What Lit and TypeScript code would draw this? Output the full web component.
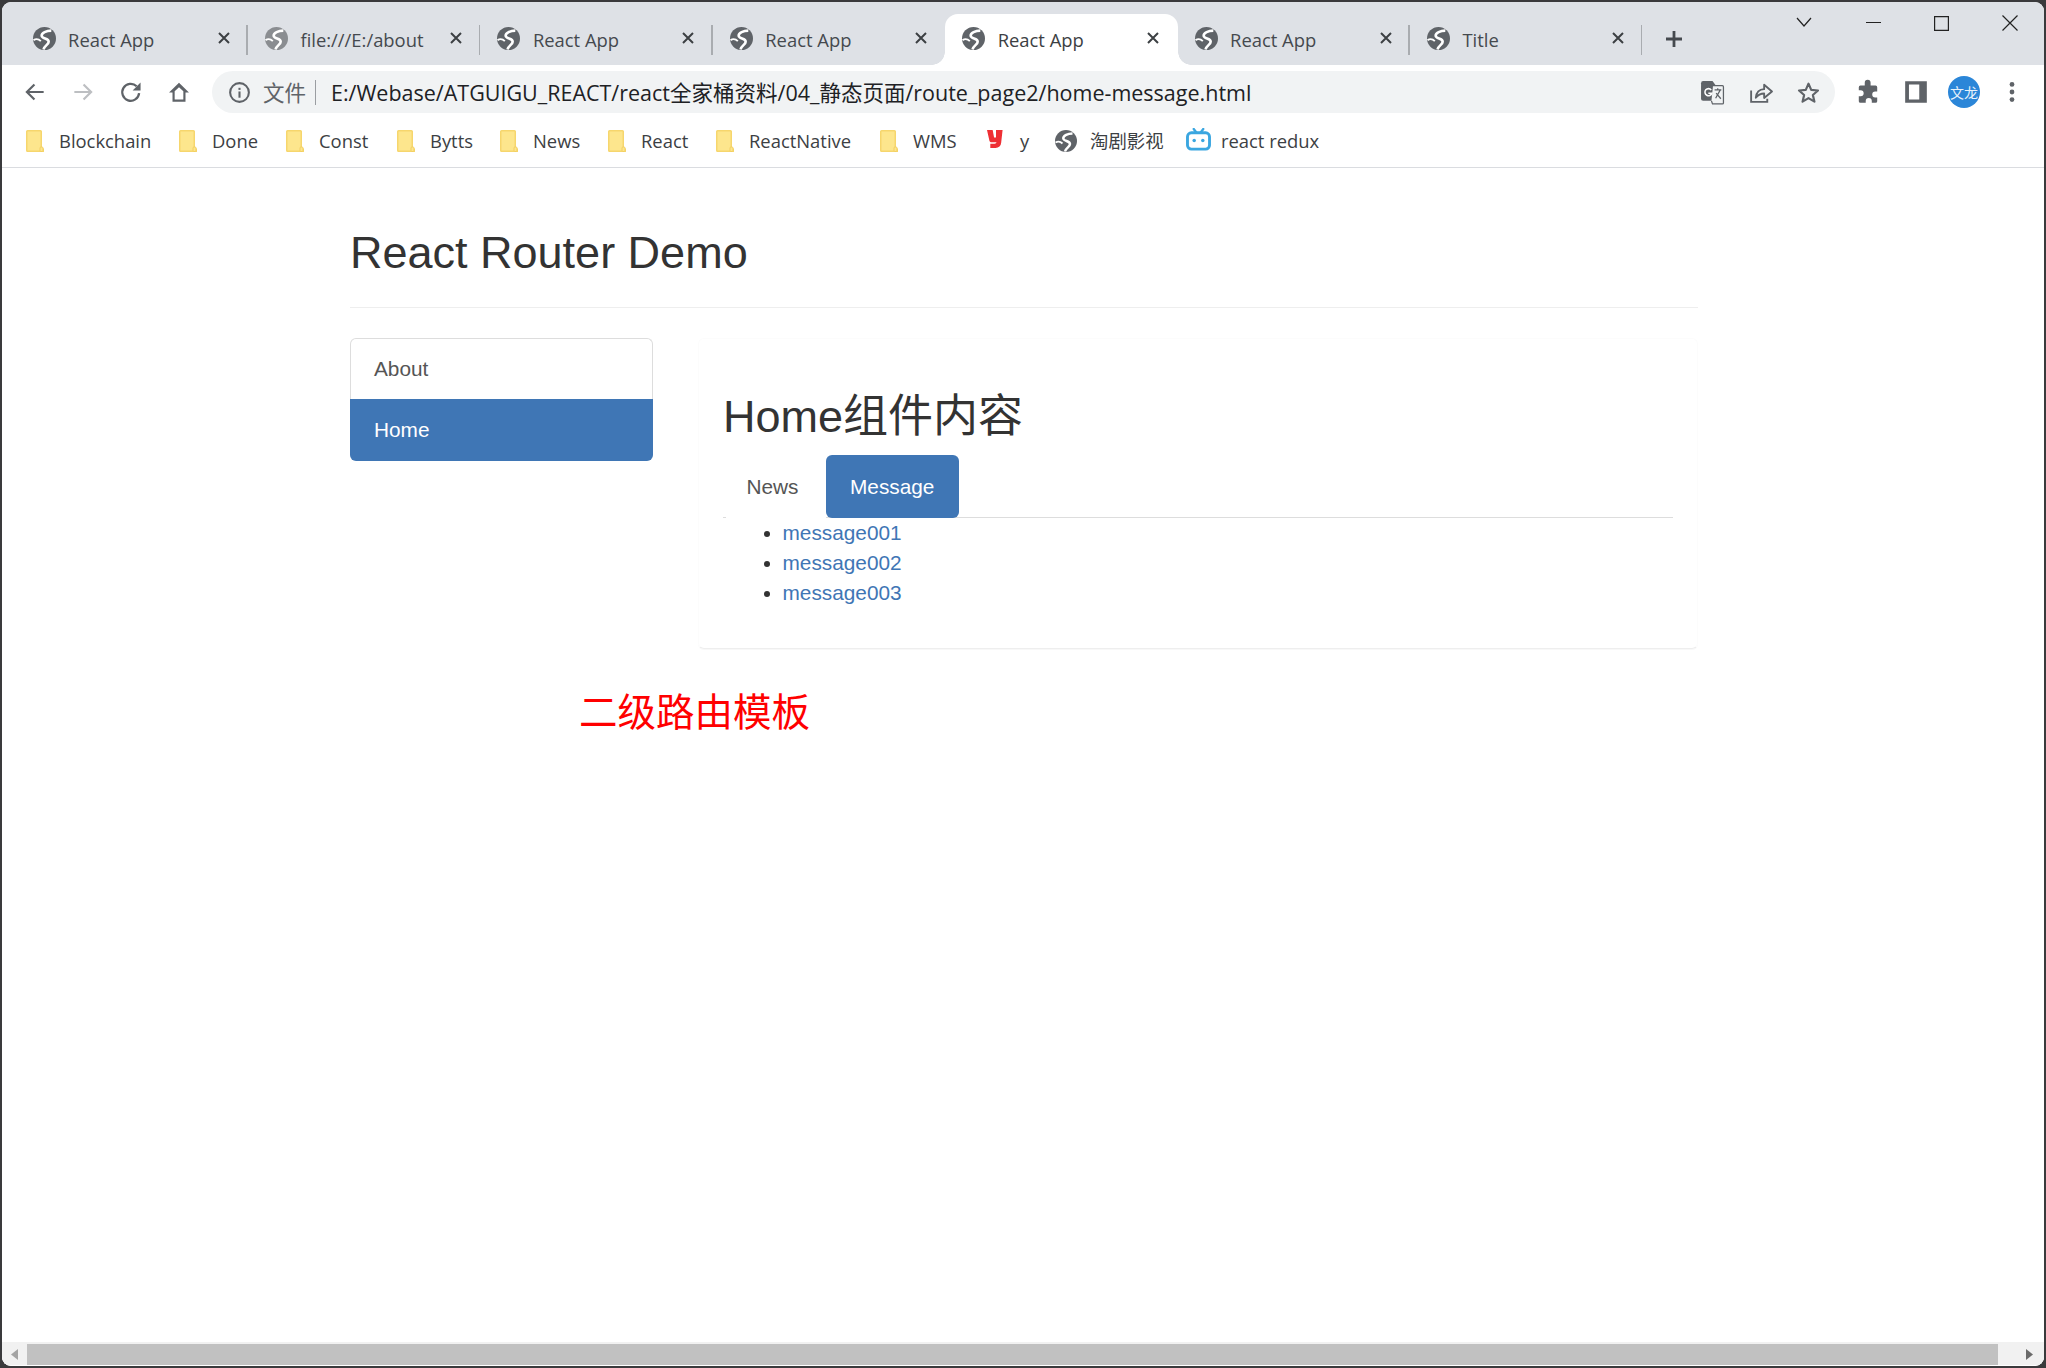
import { LitElement, html, css, svg } from "lit";
import { customElement } from "lit/decorators.js";
import { classMap } from "lit/directives/class-map.js";

const UI_FONT = css`"Open Sans", "Noto Sans CJK SC", sans-serif`;

const globe = (cls = "") => html`<svg class="globe ${cls}" viewBox="0 0 22 22">
  <circle cx="11" cy="11" r="11" fill="currentColor"></circle>
  <path d="M17.5 3.5C13 3.500 8 5.500 8.300 8.500 8.600 11.500 15 10.500 15 14 15 17 11 17.500 10 21.500" fill="none" stroke="#fff" stroke-width="2.500"></path>
  <path d="M.5 12.500C3 11 5.500 11.500 7.500 13.500" fill="none" stroke="#fff" stroke-width="1.800"></path>
</svg>`;

const closeX = html`<svg class="close" viewBox="0 0 14 14"><path d="M2 2l10 10M12 2L2 12" stroke="currentColor" stroke-width="2" fill="none"></path></svg>`;

const folder = html`<svg class="folder" viewBox="0 0 18 22">
  <path d="M1.5 0h13a1.5 1.5 0 0 1 1.5 1.500v17h2V22H1.500A1.500 1.500 0 0 1 0 20.500v-19A1.500 1.500 0 0 1 1.500 0z" fill="#f6d66d"></path>
  <rect x="1.5" y="1.5" width="13" height="19" fill="#fde68d"></rect>
  <rect x="14" y="17" width="3" height="4.5" rx="1" fill="#fde68d" stroke="#f2cf62"></rect>
</svg>`;

const icons: Record<string, unknown> = {
  back: svg`<path d="M20 12H5M11.5 5L4.5 12l7 7" fill="none" stroke="currentColor" stroke-width="2"></path>`,
  reload: svg`<path d="M19.5 13a7.8 7.8 0 1 1-2.300-6.300" fill="none" stroke="currentColor" stroke-width="2.1"></path><path d="M20.8 3.2v7.3h-7.3z" fill="currentColor"></path>`,
  home: svg`<path d="M12 3.5L2.8 12.5H6v8.5h12v-8.500h3.200zM8 19v-7.700l4-3.700 4 3.700V19z" fill="currentColor" fill-rule="evenodd"></path>`,
  info: svg`<circle cx="12" cy="12" r="9" fill="none" stroke="currentColor" stroke-width="2"></circle><rect x="11" y="11" width="2" height="6" fill="currentColor"></rect><rect x="11" y="7.5" width="2" height="2" fill="currentColor"></rect>`,
  translate: svg`<path d="M1 3a2 2 0 0 1 2-2h9l3 4v15H3a2 2 0 0 1-2-2z" fill="currentColor"></path><path d="M12.5 5.5h9a1 1 0 0 1 1 1V22a1 1 0 0 1-1 1H12l-1-3" fill="#f1f3f4" stroke="currentColor" stroke-width="1.2"></path><path d="M10.8 9.5a3.400 3.400 0 1 0 .6 3.200H8" fill="none" stroke="#fff" stroke-width="1.5"></path><path d="M14 9.5h6.5M17 8v1.500M15 17.500l4.500-8M15.500 12.500l4.500 5.500" fill="none" stroke="currentColor" stroke-width="1.2"></path>`,
  share: svg`<path d="M3 10v11h15.500v-3" fill="none" stroke="currentColor" stroke-width="1.8"></path><path d="M7.500 17c.5-5 3.500-8 8-8.200V4.500L23 11l-7.500 6.300v-4.400c-3.500 0-6 1.400-8 4.100z" fill="none" stroke="currentColor" stroke-width="1.8" stroke-linejoin="round"></path>`,
  star: svg`<path d="M12 3.500l2.600 6 6.500.6-4.900 4.300 1.500 6.400L12 17.400l-5.700 3.400 1.500-6.400L2.900 10.100l6.500-.6z" fill="none" stroke="currentColor" stroke-width="2.100" stroke-linejoin="round"></path>`,
  puzzle: svg`<path d="M9 3.500a2.700 2.700 0 0 1 5.400 0V6H19a1.500 1.500 0 0 1 1.500 1.500v4h-1.800a2.800 2.800 0 0 0 0 5.600h1.800v3.400A1.500 1.500 0 0 1 19 22h-3.500v-1.600a2.800 2.800 0 0 0-5.600 0V22H5a1.500 1.500 0 0 1-1.500-1.500V16h1.700a2.800 2.800 0 0 0 0-5.600H3.500V7.500A1.500 1.500 0 0 1 5 6h4z" fill="currentColor"></path>`,
  panel: svg`<path d="M2 2h20v20H2zM5.500 5v14H15V5z" fill="currentColor" fill-rule="evenodd"></path>`,
  dots: svg`<circle cx="12" cy="5" r="2.2" fill="currentColor"></circle><circle cx="12" cy="12" r="2.2" fill="currentColor"></circle><circle cx="12" cy="19" r="2.2" fill="currentColor"></circle>`,
};

const icon = (name: string, dim = false) =>
  html`<svg class=${classMap({ ico: true, dim })} viewBox="0 0 24 24">${icons[name]}</svg>`;

const tabs = [
  { title: "React App" },
  { title: "file:///E:/about", light: true },
  { title: "React App" },
  { title: "React App", nosep: true },
  { title: "React App", active: true, nosep: true },
  { title: "React App" },
  { title: "Title" },
];

const yIcon = html`<svg class="fav" viewBox="0 0 18 22"><path d="M0 2h6l1.5 8h2V2h7l-1.500 13.500c-.3 3.500-2.500 5.500-6 5.500H3.500v-4.500h4.500c1.200 0 2-.6 2-1.500H5c-1.500 0-2.300-.8-2.500-2z" fill="#ee2f34"></path></svg>`;
const biliIcon = html`<svg class="bili" viewBox="0 0 26 24">
  <path d="M8 1l3 4M18 1l-3 4" stroke="#3aa6e0" stroke-width="2.4" stroke-linecap="round"></path>
  <rect x="1.5" y="5" width="23" height="17" rx="4" fill="none" stroke="#3aa6e0" stroke-width="3"></rect>
  <circle cx="8.5" cy="13" r="1.8" fill="#3aa6e0"></circle><circle cx="17.5" cy="13" r="1.8" fill="#3aa6e0"></circle>
</svg>`;

// slot width of each bookmark, icon and label start are pinned to the reference
const bookmarks = [
  { label: "Blockchain", w: 153 },
  { label: "Done", w: 107 },
  { label: "Const", w: 111 },
  { label: "Bytts", w: 103 },
  { label: "News", w: 108 },
  { label: "React", w: 108 },
  { label: "ReactNative", w: 164 },
  { label: "WMS", w: 107 },
  { label: "y", w: 68, icon: yIcon },
  { label: "淘剧影视", w: 131, icon: globe("small") },
  { label: "react redux", w: 150, icon: biliIcon },
];

@customElement("app-root")
export class AppRoot extends LitElement {
  static styles = css`
    :host {
      display: block;
      width: 2046px;
      height: 1368px;
      box-sizing: border-box;
      padding: 2px;
      background: #3a3a3c;
      overflow: hidden;
    }
    .window {
      height: 100%;
      display: flex;
      flex-direction: column;
      background: #fff;
      border-radius: 9px;
      overflow: hidden;
    }
    .tabstrip {
      height: 63px;
      flex: none;
      box-sizing: border-box;
      padding: 12px 0 0 13.6px;
      display: flex;
      background: #dee1e6;
      font: 18.4px ${UI_FONT};
      color: #45494e;
    }
    .tab {
      position: relative;
      flex: none;
      width: 232.4px;
      height: 51px;
      display: flex;
      align-items: center;
      padding: 0 0 1px 17px;
      box-sizing: border-box;
    }
    .tab .globe {
      width: 23px;
      height: 23px;
      margin-top: -2px;
      flex: none;
      color: #5f6368;
    }
    .tab.light .globe {
      color: #8a8d91;
    }
    .tab .title {
      margin-left: 12.5px;
      width: 140px;
      margin-top: 1px;
      white-space: nowrap;
      overflow: hidden;
    }
    .tab .close {
      width: 14px;
      height: 14px;
      margin-left: 8.5px;
      margin-top: -3px;
      color: #3c4043;
    }
    .tab::after {
      content: "";
      position: absolute;
      right: 0;
      top: 11px;
      width: 1.5px;
      height: 30px;
      background: #a9acb0;
    }
    .tab.nosep::after {
      display: none;
    }
    .tab.active {
      background: #fff;
      border-radius: 13px 13px 0 0;
      color: #3c4043;
    }
    .tab.active::before,
    .tab.active .flare {
      content: "";
      position: absolute;
      bottom: 0;
      width: 13px;
      height: 13px;
    }
    .tab.active::before {
      left: -13px;
      background: radial-gradient(circle at 0 0, transparent 12.5px, #fff 13px);
    }
    .tab.active .flare {
      right: -13px;
      background: radial-gradient(circle at 100% 0, transparent 12.5px, #fff 13px);
    }
    .newtab {
      width: 20px;
      height: 20px;
      margin: 15px 0 0 22px;
      color: #45494e;
    }
    .caption {
      display: flex;
      align-items: center;
      margin-left: auto;
      height: 18px;
      color: #222;
    }
    .caption svg {
      flex: none;
      fill: none;
      stroke: currentColor;
      stroke-width: 1.2;
    }
    .chev {
      width: 16px;
      height: 10px;
      margin-right: 54px;
      margin-top: -2px;
    }
    .min {
      width: 15px;
      height: 15px;
      margin-right: 53px;
      margin-top: -2px;
    }
    .max {
      width: 15px;
      height: 15px;
      margin-right: 53px;
    }
    .x {
      width: 16px;
      height: 16px;
      margin-right: 26px;
    }
    .toolbar {
      height: 55px;
      flex: none;
      display: flex;
      align-items: flex-start;
      box-sizing: border-box;
      padding: 6px 0 0 9px;
      color: #5f6368;
    }
    .btn {
      width: 48px;
      height: 42px;
      flex: none;
      display: flex;
      align-items: center;
      justify-content: center;
    }
    .ico {
      width: 26px;
      height: 26px;
    }
    .ico.dim {
      color: #bdbfc2;
    }
    .omnibox {
      flex: none;
      width: 1623px;
      height: 42px;
      margin: 0 9px;
      display: flex;
      align-items: center;
      box-sizing: border-box;
      padding-left: 3px;
      border-radius: 21px;
      background: #f1f3f4;
      font: 21.5px ${UI_FONT};
    }
    .omnibox .btn .ico {
      width: 25px;
      height: 25px;
    }
    .scheme {
      color: #5f6368;
      width: 53px;
      padding-right: 10px;
      box-sizing: border-box;
      border-right: 1.5px solid #9a9da1;
      line-height: 25px;
      white-space: nowrap;
      flex: none;
    }
    .url {
      margin-left: 15px;
      margin-top: -2px;
      color: #202124;
      white-space: nowrap;
      flex: none;
      width: 1357px;
    }
    .avatar {
      width: 32px;
      height: 32px;
      border-radius: 50%;
      background: #2b86d8;
      color: #e8f2fb;
      font: 14px "Noto Sans CJK SC", sans-serif;
      text-align: center;
      line-height: 32px;
    }
    .bookmarks {
      flex: none;
      display: flex;
      align-items: center;
      box-sizing: border-box;
      padding: 0 0 5px 24px;
      border-bottom: 1px solid #dadce0;
      height: 48px;
      font: 18.4px ${UI_FONT};
      color: #3c4043;
    }
    .bm {
      flex: none;
      display: flex;
      align-items: center;
      height: 39px;
      white-space: nowrap;
    }
    .bm .label {
      margin-top: -2px;
    }
    .bm .slot {
      width: 33px;
      flex: none;
      display: flex;
      align-items: center;
    }
    .folder {
      width: 18px;
      height: 22px;
      margin-top: -1px;
    }
    .fav {
      width: 17px;
      height: 21px;
      margin-top: -6px;
    }
    .bm .globe.small {
      width: 22px;
      height: 22px;
      color: #5f6368;
    }
    .bili {
      width: 25px;
      height: 23px;
      margin-top: -3px;
    }
    .bm.wide .slot {
      width: 35px;
    }
    .page {
      flex: 1;
      min-height: 0;
      padding: 59.5px 0 0 348px;
      font-family: "Liberation Sans", "Noto Sans CJK SC", sans-serif;
      font-size: 20.8px;
      color: #333;
    }
    h2 {
      margin: 0;
      font-size: 45px;
      font-weight: 400;
      line-height: 49.5px;
      color: #333;
    }
    .page-header {
      width: 1348px;
      padding-bottom: 29.5px;
      border-bottom: 1.5px solid #eee;
      margin-bottom: 30px;
    }
    .row {
      display: flex;
      gap: 45px;
      width: 1348px;
      align-items: flex-start;
    }
    .nav {
      width: 303px;
      flex: none;
      line-height: 30px;
    }
    .nav a {
      display: block;
      padding: 15px 24px 15px;
      height: 30px;
    }
    .nav .about {
      border: 1.5px solid #ddd;
      border-bottom: 0;
      border-radius: 6px 6px 0 0;
      padding-left: 23px;
      color: #555;
    }
    .nav .home {
      background: #3f76b5;
      color: #fff;
      border-radius: 0 0 6px 6px;
      padding-top: 16px;
      padding-bottom: 16.5px;
    }
    .panel {
      width: 1000px;
      box-sizing: border-box;
      padding: 53px 24px 25px;
      border: 1px solid #fcfcfc;
      border-bottom-color: #eee;
      border-radius: 6px;
      box-shadow: 0 1px 1px rgba(0, 0, 0, 0.03);
    }
    .tabs {
      display: flex;
      height: 62px;
      margin-top: 14px;
      width: 950px;
      line-height: 30px;
      border-bottom: 1.5px solid #ddd;
    }
    .tabs a {
      flex: none;
      height: 62.5px;
      box-sizing: border-box;
      padding: 17px 24px;
    }
    .tabs .news {
      color: #555;
      width: 100px;
      margin-left: 3px;
      padding-left: 20.5px;
      background: #fff;
      border-bottom: 2px solid #fff;
    }
    .tabs .msg {
      background: #3f76b5;
      color: #fff;
      width: 133px;
      border-radius: 6px;
    }
    ul {
      margin: 0 0 15px;
      padding: 0 0 0 59.5px;
      line-height: 30px;
    }
    li a {
      color: #3f76b5;
    }
    .note {
      margin: 30px 0 0 229px;
      color: #f00;
      font: 38.5px/60px "Noto Sans CJK SC", sans-serif;
    }
    .hbar {
      flex: none;
      height: 24px;
      box-sizing: border-box;
      padding-bottom: 1px;
      background: #fff;
      display: flex;
    }
    .hbar .track {
      flex: 1;
      display: flex;
      align-items: stretch;
      background: #f1f1f1;
      padding-top: 2px;
    }
    .arrow {
      width: 25px;
      flex: none;
      display: flex;
      align-items: center;
      justify-content: center;
    }
    .arrow svg {
      width: 7px;
      height: 11px;
      fill: #6a6a6a;
    }
    .arrow.l svg {
      fill: #a3a3a3;
    }
    .thumb {
      flex: 1;
      background: #c1c1c1;
    }
  `;

  render() {
    return html`<div class="window">
      <div class="tabstrip">
        ${tabs.map(
          (t) => html`<div class=${classMap({ tab: true, active: !!t.active, nosep: !!t.nosep, light: !!t.light })}>
            ${globe()}
            <span class="title">${t.title}</span>
            ${closeX}
            ${t.active ? html`<i class="flare"></i>` : ""}
          </div>`
        )}
        <svg class="newtab" viewBox="0 0 20 20"><path d="M10 2v16M2 10h16" stroke="currentColor" stroke-width="2.8"></path></svg>
        <div class="caption">
          <svg class="chev" viewBox="0 0 16 10"><path d="M1 1l7 8 7-8"></path></svg>
          <svg class="min" viewBox="0 0 15 15"><path d="M0 7.5h15"></path></svg>
          <svg class="max" viewBox="0 0 15 15"><path d="M.6.6h13.8v13.8H.6z"></path></svg>
          <svg class="x" viewBox="0 0 16 16"><path d="M.5.5l15 15M15.5.5l-15 15"></path></svg>
        </div>
      </div>

      <div class="toolbar">
        <div class="btn">${icon("back")}</div>
        <div class="btn" style="transform: scaleX(-1)">${icon("back", true)}</div>
        <div class="btn">${icon("reload")}</div>
        <div class="btn">${icon("home")}</div>
        <div class="omnibox">
          <div class="btn">${icon("info")}</div>
          <span class="scheme">文件</span>
          <span class="url">E:/Webase/ATGUIGU_REACT/react全家桶资料/04_静态页面/route_page2/home-message.html</span>
          <div class="btn">${icon("translate")}</div>
          <div class="btn">${icon("share")}</div>
          <div class="btn">${icon("star")}</div>
        </div>
        <div class="btn">${icon("puzzle")}</div>
        <div class="btn">${icon("panel")}</div>
        <div class="btn"><div class="avatar">文龙</div></div>
        <div class="btn">${icon("dots")}</div>
      </div>

      <div class="bookmarks">
        ${bookmarks.map(
          (b) => html`<div class=${classMap({ bm: true, wide: !!b.icon && b.label !== "y" })} style="width: ${b.w}px">
            <span class="slot">${b.icon ?? folder}</span>
            <span class="label">${b.label}</span>
          </div>`
        )}
      </div>

      <div class="page">
        <div class="page-header"><h2>React Router Demo</h2></div>
        <div class="row">
          <div class="nav">
            <a class="about">About</a>
            <a class="home">Home</a>
          </div>
          <div class="panel">
            <h2>Home组件内容</h2>
            <div class="tabs">
              <a class="news">News</a>
              <a class="msg">Message</a>
            </div>
            <ul>
              <li><a>message001</a></li>
              <li><a>message002</a></li>
              <li><a>message003</a></li>
            </ul>
          </div>
        </div>
        <div class="note">二级路由模板</div>
      </div>

      <div class="hbar">
        <div class="track">
          <div class="arrow l"><svg viewBox="0 0 7 11"><path d="M7 0v11L0 5.5z"></path></svg></div>
          <div class="thumb"></div>
          <div class="arrow" style="width: 46px"><svg viewBox="0 0 7 11" style="margin-left: 16px"><path d="M0 0v11l7-5.5z"></path></svg></div>
        </div>
      </div>
    </div>`;
  }
}
